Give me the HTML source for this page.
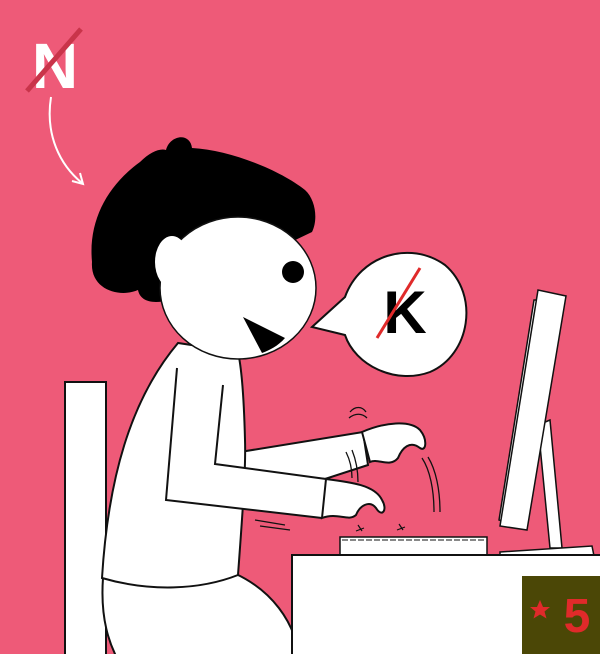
<!DOCTYPE html>
<html><head><style>html,body{margin:0;padding:0;background:#EE5A78;}svg{display:block}</style></head>
<body>
<svg width="600" height="654" viewBox="0 0 600 654" xmlns="http://www.w3.org/2000/svg">
<rect width="600" height="654" fill="#EE5A78"/>
<text x="55" y="88" font-family="Liberation Sans, sans-serif" font-weight="bold" font-size="64" fill="#fff" text-anchor="middle">N</text>
<line x1="27" y1="91" x2="81" y2="29" stroke="#C9344A" stroke-width="5"/>
<path d="M51 97 C45 135 60 165 82 183" fill="none" stroke="#fff" stroke-width="2"/>
<path d="M72 181 L83 184 L80 173" fill="none" stroke="#fff" stroke-width="2"/>
<rect x="65" y="382" width="41" height="280" fill="#fff" stroke="#111" stroke-width="2"/>
<path d="M103 578 C100 620 110 645 118 660 L300 660 C295 620 270 590 236 574 Z" fill="#fff" stroke="#111" stroke-width="2"/>
<!-- back arm -->
<path d="M240 452 L363 432 L368 465 L325 479 L240 470 Z" fill="#fff" stroke="#111" stroke-width="2"/>
<path d="M362 432 C385 422 410 420 420 430 C428 440 426 452 420 448 C410 440 402 448 398 458 C390 468 378 458 370 462 Z" fill="#fff" stroke="#111" stroke-width="2"/>
<!-- torso -->
<path d="M178 343 C130 400 108 480 102 578 C150 592 200 590 238 575 C242 520 246 470 245 440 C244 400 242 370 238 352 Z" fill="#fff" stroke="#111" stroke-width="2"/>
<!-- front arm -->
<path d="M177 368 L223 385 L215 464 L326 479 L322 518 L166 500 Z" fill="#fff"/>
<path d="M177 368 L166 500 L322 518" fill="none" stroke="#111" stroke-width="2"/>
<path d="M223 385 L215 464 L326 479" fill="none" stroke="#111" stroke-width="2"/>
<path d="M326 479 C350 482 375 485 382 500 C388 510 382 518 376 508 C370 500 360 505 356 515 C348 522 338 512 322 518 Z" fill="#fff" stroke="#111" stroke-width="2"/>
<path d="M350 412 C355 406 362 406 366 412 M349 418 C355 413 362 413 367 418" fill="none" stroke="#111" stroke-width="1.3"/>
<path d="M346 452 C350 460 352 468 352 478 M352 450 C356 460 358 470 358 482" fill="none" stroke="#111" stroke-width="1.3"/>
<path d="M422 458 C430 470 434 490 434 512 M428 457 C436 470 440 490 440 512" fill="none" stroke="#111" stroke-width="1.3"/>
<path d="M255 520 L285 525 M260 526 L290 530" fill="none" stroke="#111" stroke-width="1.3"/>
<path d="M358 525 l4 6 m-6 0 l8 -3 M399 524 l4 6 m-6 0 l8 -3" stroke="#111" stroke-width="1.2"/>
<rect x="340" y="537" width="147" height="18" fill="#fff" stroke="#111" stroke-width="1.5"/>
<path d="M342 540 H485" stroke="#111" stroke-width="1" stroke-dasharray="6 2"/>
<path d="M538 425 L550 548 L562 548 L550 420 Z" fill="#fff" stroke="#111" stroke-width="1.5"/>
<path d="M500 552 L592 546 L594 556 L500 556 Z" fill="#fff" stroke="#111" stroke-width="1.5"/>
<path d="M499 520 L534 300 L540 300 L505 522 Z" fill="#fff" stroke="#111" stroke-width="1.5"/>
<path d="M500 526 L538 290 L566 296 L527 530 Z" fill="#fff" stroke="#111" stroke-width="1.5"/>
<rect x="292" y="555" width="320" height="110" fill="#fff" stroke="#111" stroke-width="2"/>
<rect x="522" y="576" width="78" height="78" fill="#4B4706"/>
<path d="M540 600 l3 7 l7 0 l-5.5 4.5 l2 7 l-6.5 -4 l-6.5 4 l2 -7 l-5.5 -4.5 l7 0 Z" fill="#E02A2A"/>
<text x="577" y="632" font-family="Liberation Sans, sans-serif" font-weight="bold" font-size="48" fill="#E02A2A" text-anchor="middle">5</text>
<path d="M345 297 C360 255 410 240 445 265 C480 295 470 355 430 372 C395 385 355 365 345 335 L312 327 Z" fill="#fff" stroke="#111" stroke-width="2"/>
<text x="405" y="333" font-family="Liberation Sans, sans-serif" font-weight="bold" font-size="60" fill="#000" text-anchor="middle">K</text>
<line x1="377" y1="338" x2="420" y2="268" stroke="#E02A2A" stroke-width="3"/>
<path d="M92 262 C88 220 108 185 140 162 C150 152 160 148 166 150 C170 135 190 132 192 148 C230 150 280 170 305 190 C316 200 318 220 312 232 L170 300 C150 305 140 300 138 290 C120 298 90 290 92 262 Z" fill="#000"/>
<ellipse cx="238" cy="288" rx="78" ry="71" fill="#fff" stroke="#111" stroke-width="1.5"/>
<ellipse cx="172" cy="262" rx="17" ry="26" fill="#fff"/>
<circle cx="293" cy="272" r="11" fill="#000"/>
<path d="M243 317 L285 338 C278 346 270 350 262 353 Z" fill="#000"/>
</svg>
</body></html>
